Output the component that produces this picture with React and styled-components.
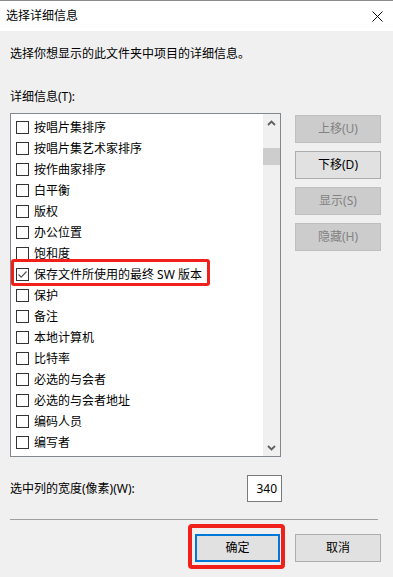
import React from "react";
import styled, { createGlobalStyle } from "styled-components";

const Global = createGlobalStyle`
  html, body { margin: 0; padding: 0; background: #f0f0f0; }
  body { font-family: "Noto Sans", "Noto Sans CJK SC", sans-serif; font-size: 12px; color: #000; }
  * { box-sizing: border-box; }
`;

const Window = styled.div`
  width: 393px;
  height: 577px;
  background: #f0f0f0;
  display: flex;
  flex-direction: column;
  border-top: 1px solid #8a8a8a;
  overflow: hidden;
`;

const TitleBar = styled.div`
  height: 30px;
  background: #fff;
  display: flex;
  align-items: center;
  justify-content: space-between;
  padding: 0 10px 0 6px;
  font-size: 12px;
  line-height: 16px;
`;

const CloseBtn = styled.div`
  width: 12px;
  height: 12px;
  display: flex;
  align-items: center;
  justify-content: center;
  margin-right: 0;
`;

const Body = styled.div`
  padding: 0 10px;
  display: flex;
  flex-direction: column;
`;

const TextLine = styled.div`
  height: 20px;
  display: flex;
  align-items: center;
  line-height: 16px;
  margin-top: ${p => p.$mt || 0}px;
`;

const MainRow = styled.div`
  display: flex;
  align-items: flex-start;
  margin-top: 6px;
  gap: 14px;
`;

const ListBox = styled.div`
  width: 271px;
  height: 344px;
  border: 1px solid #828790;
  background: #fff;
  display: flex;
`;

const Items = styled.div`
  flex: 1;
  padding-top: 3px;
  display: flex;
  flex-direction: column;
`;

const Row = styled.div`
  position: relative;
  height: 21px;
  display: flex;
  align-items: center;
  padding-left: 5px;
  gap: 5px;
  line-height: 16px;
  white-space: nowrap;
`;

const Check = styled.span`
  width: 13px;
  height: 13px;
  border: 1px solid #333;
  background: #fff;
  display: flex;
  align-items: center;
  justify-content: center;
  flex: none;
`;

const Highlight = styled.div`
  position: absolute;
  left: 0;
  top: -5px;
  width: 199px;
  height: 27px;
  border: 3px solid #f2201a;
  border-radius: 3px;
  pointer-events: none;
`;

const ScrollBar = styled.div`
  width: 17px;
  height: 100%;
  background: #f0f0f0;
  display: flex;
  flex-direction: column;
  align-items: center;
`;

const Arrow = styled.div`
  width: 17px;
  height: 17px;
  display: flex;
  align-items: center;
  justify-content: center;
`;

const Thumb = styled.div`
  width: 17px;
  height: 17px;
  background: #cdcdcd;
  margin-top: 17px;
`;

const Spacer = styled.div`
  flex: 1;
`;

const SideButtons = styled.div`
  display: flex;
  flex-direction: column;
  gap: 8px;
  margin-top: 2px;
`;

const Button = styled.div`
  width: ${p => p.$w || 86}px;
  height: 28px;
  display: flex;
  align-items: center;
  justify-content: center;
  line-height: 16px;
  background: ${p => (p.$disabled ? "#cccccc" : "#e1e1e1")};
  border: ${p => (p.$primary ? "2px solid #0078d7" : p.$disabled ? "1px solid #bfbfbf" : "1px solid #adadad")};
  color: ${p => (p.$disabled ? "#838383" : "#000")};
`;

const WidthRow = styled.div`
  width: 272px;
  display: flex;
  align-items: center;
  justify-content: space-between;
  margin-top: 18px;
  line-height: 16px;
`;

const NumberBox = styled.div`
  width: 35px;
  height: 27px;
  background: #fff;
  border: 1px solid #7a7a7a;
  display: flex;
  align-items: center;
  justify-content: flex-end;
  padding-right: 4px;
`;

const Separator = styled.div`
  width: 368px;
  height: 1px;
  background: #a0a0a0;
  margin-top: 17px;
`;

const Footer = styled.div`
  display: flex;
  justify-content: flex-end;
  gap: 15px;
  margin-top: 14px;
  padding-right: 2px;
`;

const Marked = styled.div`
  position: relative;
`;

const OuterMark = styled.div`
  position: absolute;
  left: -7px;
  top: -10px;
  width: 97px;
  height: 45px;
  border: 4px solid #f2201a;
  border-radius: 4px;
  pointer-events: none;
`;

const items = [
  "按唱片集排序",
  "按唱片集艺术家排序",
  "按作曲家排序",
  "白平衡",
  "版权",
  "办公位置",
  "饱和度",
  "保存文件所使用的最终 SW 版本",
  "保护",
  "备注",
  "本地计算机",
  "比特率",
  "必选的与会者",
  "必选的与会者地址",
  "编码人员",
  "编写者",
];

const CheckMark = () => (
  <svg width="11" height="11" viewBox="0 0 11 11">
    <path d="M1.5 5.5 L4.2 8.2 L9.5 2.5" fill="none" stroke="#555" strokeWidth="1.2" />
  </svg>
);

export default function App() {
  return (
    <>
      <Global />
      <Window>
        <TitleBar>
          <span>选择详细信息</span>
          <CloseBtn>
            <svg width="11" height="11" viewBox="0 0 11 11">
              <path d="M0.5 0.5 L10.5 10.5 M10.5 0.5 L0.5 10.5" stroke="#111" strokeWidth="1" fill="none" />
            </svg>
          </CloseBtn>
        </TitleBar>
        <Body>
          <TextLine $mt={13}>选择你想显示的此文件夹中项目的详细信息。</TextLine>
          <TextLine $mt={23}>详细信息(T):</TextLine>
          <MainRow>
            <ListBox>
              <Items>
                {items.map((t, i) => (
                  <Row key={t}>
                    <Check>{i === 7 && <CheckMark />}</Check>
                    <span>{t}</span>
                    {i === 7 && <Highlight />}
                  </Row>
                ))}
              </Items>
              <ScrollBar>
                <Arrow>
                  <svg width="9" height="6" viewBox="0 0 9 6">
                    <path d="M1 5 L4.5 1.5 L8 5" fill="none" stroke="#606060" strokeWidth="1.8" />
                  </svg>
                </Arrow>
                <Thumb />
                <Spacer />
                <Arrow>
                  <svg width="9" height="6" viewBox="0 0 9 6">
                    <path d="M1 1 L4.5 4.5 L8 1" fill="none" stroke="#606060" strokeWidth="1.8" />
                  </svg>
                </Arrow>
              </ScrollBar>
            </ListBox>
            <SideButtons>
              <Button $disabled>上移(U)</Button>
              <Button>下移(D)</Button>
              <Button $disabled>显示(S)</Button>
              <Button $disabled>隐藏(H)</Button>
            </SideButtons>
          </MainRow>
          <WidthRow>
            <span>选中列的宽度(像素)(W):</span>
            <NumberBox>340</NumberBox>
          </WidthRow>
          <Separator />
          <Footer>
            <Marked>
              <Button $primary $w={85}>确定</Button>
              <OuterMark />
            </Marked>
            <Button>取消</Button>
          </Footer>
        </Body>
      </Window>
    </>
  );
}
